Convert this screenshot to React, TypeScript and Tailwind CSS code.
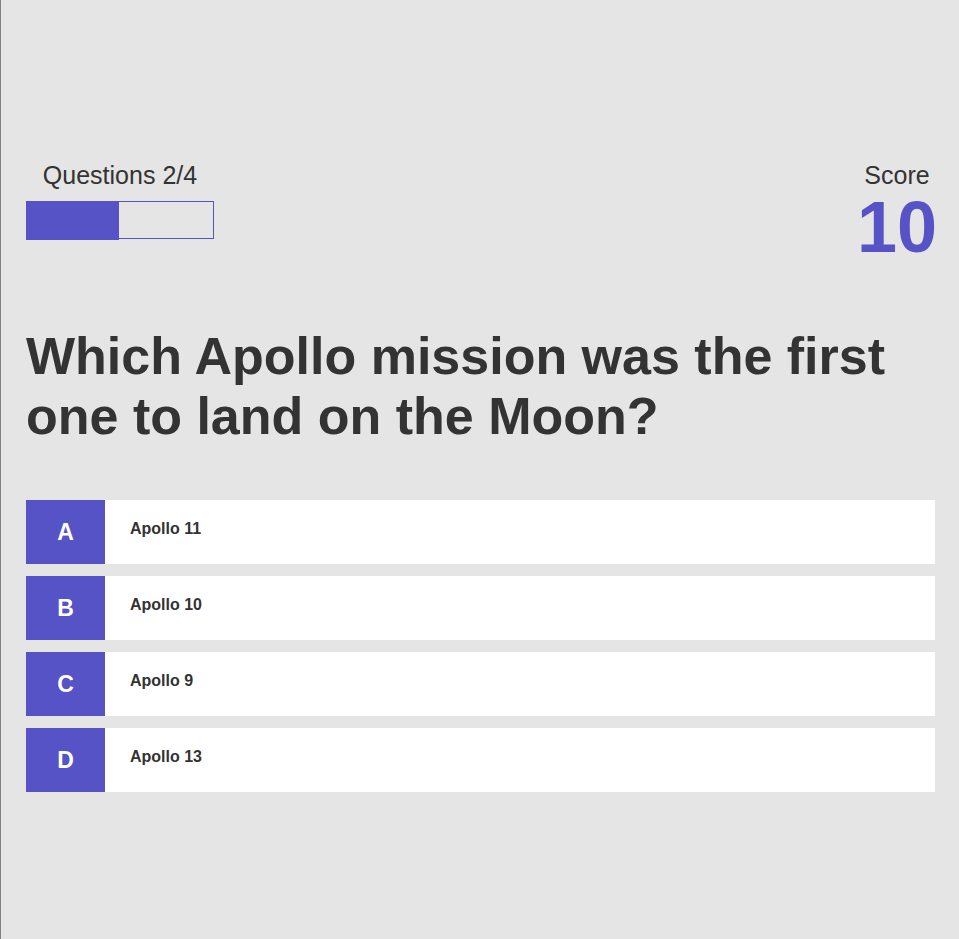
const options = [
  { letter: "A", text: "Apollo 11" },
  { letter: "B", text: "Apollo 10" },
  { letter: "C", text: "Apollo 9" },
  { letter: "D", text: "Apollo 13" },
];

export default function App() {
  const current = 2;
  const total = 4;
  return (
    <div
      className="min-h-[939px] bg-[#e5e5e5] border-l border-[#808080] pl-[25px] pr-[24px] pt-[161px] text-[#333]"
      style={{ fontFamily: '"Liberation Sans", Arial, sans-serif' }}
    >
      <div className="flex justify-between items-start">
        <div className="w-[188px] flex flex-col">
          <div className="text-center text-[25px] leading-[28px]">
            Questions {current}/{total}
          </div>
          <div className="relative mt-[12px] h-[38px] border border-[#5653c6]">
            <div
              className="absolute -left-px -top-px -bottom-[2px] bg-[#5653c6]"
              style={{ width: `${(current / total) * 188 - 1}px` }}
            />
          </div>
        </div>
        <div className="w-[76px] flex flex-col items-center">
          <div className="text-[25px] leading-[28px]">Score</div>
          <div className="mt-[2px] text-[72px] leading-[72px] font-bold text-[#5653c6]">10</div>
        </div>
      </div>

      <h1 className="mt-[63px] text-[52px] leading-[60px] font-bold">
        Which Apollo mission was the first one to land on the Moon?
      </h1>

      <div className="mt-[54px] flex flex-col gap-[12px]">
        {options.map((o) => (
          <div key={o.letter} className="flex h-[64px] bg-white">
            <div className="w-[79px] bg-[#5653c6] text-white font-bold text-[23px] flex items-center justify-center">
              {o.letter}
            </div>
            <div className="pl-[25px] pt-[20px] text-[16px] leading-[18px] font-bold">{o.text}</div>
          </div>
        ))}
      </div>
    </div>
  );
}
